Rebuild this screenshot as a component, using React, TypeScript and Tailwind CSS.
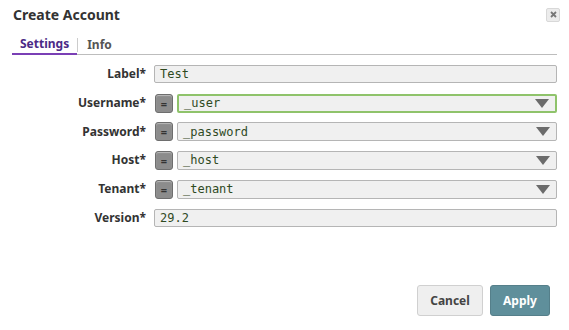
import { ReactNode } from "react";

const mono = "font-['DejaVu_Sans_Mono',monospace]";

function Row({ label, children }: { label: string; children: ReactNode }) {
  return (
    <div className="flex items-center h-[28.7px]">
      <div className="w-[154px] pr-[8px] text-right text-[12px] font-bold text-[#333]">{label}</div>
      <div className="flex-1 flex items-center">{children}</div>
    </div>
  );
}

function TextField({ value }: { value: string }) {
  return (
    <div className={`h-[18px] flex-1 border border-[#b5b5b5] rounded-[2px] bg-[#f0f0f0] pl-[5px] flex items-center text-[12px] text-[#2f4a1f] ${mono}`}>
      {value}
    </div>
  );
}

function ExprField({ value, active }: { value: string; active?: boolean }) {
  return (
    <div className="flex items-center flex-1 gap-[4px] pl-[1px]">
      <div className="w-[18px] h-[19px] rounded-[3px] bg-[#8c8c8c] border border-[#6e6e6e] flex items-center justify-center shadow-[inset_0_1px_1px_rgba(255,255,255,0.4)]">
        <span className="text-[11px] font-bold text-[#333] leading-none">=</span>
      </div>
      <div
        className={`h-[19px] flex-1 rounded-[2px] bg-[#f0f0f0] pl-[5px] pr-[6px] flex items-center justify-between text-[12px] text-[#2f4a1f] ${mono} ${
          active ? "border-2 border-[#8fc36b]" : "border border-[#b5b5b5]"
        }`}
      >
        <span>{value}</span>
        <svg width="14" height="9" viewBox="0 0 14 9">
          <polygon points="0,0 14,0 7,9" fill="#6b6b6b" />
        </svg>
      </div>
    </div>
  );
}

export default function App() {
  return (
    <div className="w-[569px] h-[330px] bg-white font-['Noto_Sans',sans-serif] relative">
      <div className="flex items-center justify-between px-[13px] pt-[2px] h-[27px]">
        <div className="text-[14px] font-bold text-[#333]">Create Account</div>
        <div className="w-[14px] h-[14px] mr-[-4px] rounded-[2px] bg-[#ececec] border border-[#d8d8d8] flex items-center justify-center">
          <svg width="7" height="7" viewBox="0 0 7 7">
            <path d="M1 1 L6 6 M6 1 L1 6" stroke="#777" strokeWidth="1.8" />
          </svg>
        </div>
      </div>
      <div className="mx-[12px] mt-[7px] flex items-end border-b border-[#bdbdbd] h-[21px]">
        <div className="px-[8px] pb-[0px] text-[12px] font-bold text-[#4b2a86] border-b-2 border-[#7a3fb5] mb-[-1px]">Settings</div>
        <div className="w-px h-[14px] bg-[#ccc] mb-[2px]" />
        <div className="px-[9px] pb-[0px] text-[12px] font-bold text-[#555]">Info</div>
      </div>
      <div className="pt-[5px] pr-[12px]">
        <Row label="Label*"><TextField value="Test" /></Row>
        <Row label="Username*"><ExprField value="_user" active /></Row>
        <Row label="Password*"><ExprField value="_password" /></Row>
        <Row label="Host*"><ExprField value="_host" /></Row>
        <Row label="Tenant*"><ExprField value="_tenant" /></Row>
        <Row label="Version*"><TextField value="29.2" /></Row>
      </div>
      <div className="absolute right-[19px] bottom-[14px] flex gap-[7px]">
        <button className="w-[66px] h-[31px] rounded-[3px] bg-[#efefef] border border-[#d0d0d0] text-[12px] font-bold text-[#444]">Cancel</button>
        <button className="w-[60px] h-[31px] rounded-[3px] bg-[#5f8f9b] border border-[#557f8a] text-[12px] font-bold text-white">Apply</button>
      </div>
    </div>
  );
}
